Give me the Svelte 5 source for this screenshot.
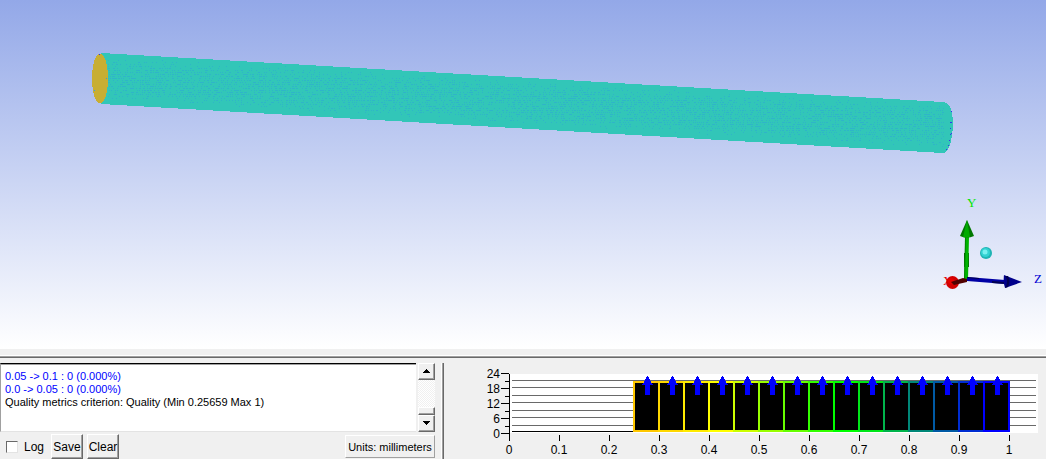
<script lang='ts'>
    type Line = { text: string, info: boolean };
    type Bar = { x: number, color: string };

    let messages: Line[] = [
        { text: '0.05 -> 0.1 : 0 (0.000%)', info: true },
        { text: '0.0 -> 0.05 : 0 (0.000%)', info: true },
        { text: 'Quality metrics criterion: Quality (Min 0.25659 Max 1)', info: false }
    ];
    let shown: Line[] = $state(messages);
    let log: boolean = $state(false);
    let logBox: HTMLElement;

    const colors: string[] = ['#ffc800', '#ffd800', '#ffeb00', '#ffff00', '#ccff00', '#99ff00', '#66ff00', '#33ff00',
        '#00ff00', '#00e619', '#00b44b', '#008778', '#005aa5', '#002dd2', '#0000ff'];
    const bars: Bar[] = colors.map((color, i) => ({ x: 190 + i * 25, color }));
    const yTicks: number[] = [24, 18, 12, 6, 0];
    const xTicks: string[] = ['0', '0.1', '0.2', '0.3', '0.4', '0.5', '0.6', '0.7', '0.8', '0.9', '1'];
    const gridLines: number[] = [17, 24, 32, 39, 47, 54, 62];

    // surface mesh seen from far away: small dots along the tube
    function meshDots(): string {
        let seed: number = 7;
        let path: string = '';
        const next = (): number => {
            seed = (seed * 16807) % 2147483647;
            return seed / 2147483647;
        };
        for(let i = 0; i < 6000; ++i) {
            const x = Math.floor(108 + next() * 836);
            const spread = (next() + next() * 3) / 4;
            const y = Math.floor((57 + (x - 102) * 0.0583 + spread * 43) / 2) * 2;
            path += `M${x} ${y}h1v1h-1z`;
        }
        return path;
    }
    const dots: string = meshDots();

    function scrollLog(step: number): void {
        logBox.scrollTop += step;
    }

    function save(): void {
        const blob = new Blob([shown.map(m => m.text).join('\n')], { type: 'text/plain' });
        const link = document.createElement('a');
        link.href = URL.createObjectURL(blob);
        link.download = 'messages.txt';
        link.click();
    }
</script>

<div class='app'>
    <svg class='scene' viewBox='0 0 1046 349' role='img' aria-label='Mesh view'>
        <g shape-rendering='crispEdges'>
            <path fill='#32c6b8' d='M101 53L943 102Q948 102 951 109Q953 116 953 126Q952 140 949 147Q947 153 943 153L101 104Z' />
            <path fill='#2fb5c8' d={dots} />
            <ellipse cx='100' cy='78.5' rx='8' ry='25' fill='#c8ae33' />
            <path fill='#2a9df0' d='M106 78h1v1h-1zM94 90h1v1h-1z' />
            <path fill='#3232f0' d='M951 111h1v1h-1zM950 122h2v1h-2zM950 128h1v1h-1zM951 133h1v1h-1zM950 134h1v1h-1zM949 140h1v1h-1zM948 145h1v1h-1zM946 149h1v1h-1zM99 54h1v1h-1z' />
        </g>
        <path d='M964 253h5v14h-5z' fill='#005a00' />
        <path d='M965 237h4l-1 43h-4l1-25z' fill='#00b400' />
        <path d='M965 237h1l-1 43h-1z' fill='#008200' />
        <path d='M967 220l7 16q-7 3-14 0z' fill='#007800' />
        <path d='M967 220l3 17q-4 1-7 0z' fill='#00aa00' />
        <path d='M967 277l38 3v4l-38-3z' fill='#0000a5' />
        <path d='M967 277l12 1v1l-12-1zM992 281l13 1v2l-13-1z' fill='#000050' />
        <path d='M1004 275l18 7-17 6q-2-6-1-13z' fill='#00008c' />
        <path d='M1005 276q4 5 0 12l3-1q3-6 0-11z' fill='#000050' />
        <text x='943' y='285' class='axis' fill='#e60000'>X</text>
        <circle cx='952.5' cy='282.5' r='6.5' fill='#d20000' />
        <circle cx='951' cy='281' r='3' fill='#e60000' />
        <path d='M951 282l12-4 4 1v3l-13 3z' fill='#500000' />
        <circle cx='986' cy='253' r='6' fill='#1eb4b4' />
        <circle cx='985.5' cy='252.5' r='4.5' fill='#32d2d2' />
        <circle cx='985' cy='252' r='2.5' fill='#78f0f0' />
        <text x='967' y='207' class='axis' fill='#00e600'>Y</text>
        <text x='1034' y='283' class='axis' fill='#0000d2'>Z</text>
    </svg>

    <div class='splitter'></div>

    <div class='bottom'>
        <div class='messages'>
            <div class='log-row'>
                <div class='log' bind:this={logBox}>
                    {#each shown as line}
                        <p class:info={line.info}>{line.text}</p>
                    {/each}
                </div>
                <div class='scrollbar'>
                    <button class='arrow' aria-label='Scroll up' onclick={() => scrollLog(-13)}>
                        <svg viewBox='0 0 9 5'><path d='M4 0h1v1h1v1h1v1h1v1H1V3h1V2h1V1h1z' /></svg>
                    </button>
                    <div class='track'><div class='thumb'></div></div>
                    <button class='arrow' aria-label='Scroll down' onclick={() => scrollLog(13)}>
                        <svg viewBox='0 0 9 5'><path d='M1 0h7v1H7v1H6v1H5v1H4V3H3V2H2V1H1z' /></svg>
                    </button>
                </div>
            </div>
            <div class='controls'>
                <label><input type='checkbox' bind:checked={log} /> Log</label>
                <button class='btn' onclick={save}>Save</button>
                <button class='btn' onclick={() => shown = []}>Clear</button>
                <span class='units'>Units: millimeters</span>
            </div>
        </div>

        <svg class='chart' viewBox='0 0 602 96' role='img' aria-label='Quality histogram'>
            <g shape-rendering='crispEdges'>
                <rect x='66' y='11' width='528' height='59' fill='#fff' />
                {#each gridLines as y}
                    <rect x='68' {y} width='524' height='1' fill='#696969' />
                {/each}
                <rect x='68' y='68' width='122' height='1' />
                <rect x='65' y='11' width='1' height='67' />
                {#each yTicks as _, i}
                    <rect x='57' y={10 + i * 15} width='8' height='1' />
                    {#if i < yTicks.length - 1}
                        <rect x='61' y={18 + i * 15} width='4' height='1' />
                    {/if}
                {/each}
                {#each xTicks as _, i}
                    <rect x={65 + i * 50} y='72' width='1' height='6' />
                {/each}
                {#each bars as bar}
                    <rect x={bar.x} y='19' width='25' height='49' stroke={bar.color} stroke-width='2' />
                {/each}
                {#each bars as bar}
                    <path fill='#00f' d='M{bar.x + 13} 13h1v1h1v2h1v2h1v2h1v1h1v1h-3v10h-5v-10h-3v-1h1v-1h1v-2h1v-2h1v-2h1z' />
                {/each}
            </g>
            {#each yTicks as tick, i}
                <text x='56' y={15 + i * 15} text-anchor='end'>{tick}</text>
            {/each}
            {#each xTicks as tick, i}
                <text x={65 + i * 50} y='91' text-anchor='middle'>{tick}</text>
            {/each}
        </svg>
    </div>
</div>

<style>
    :global(body) {
        margin: 0;
        background: #f0f0f0;
    }
    .app {
        font-family: "Liberation Sans", Arial, sans-serif;
        font-size: 11px;
        color: black;
        overflow: hidden;
    }
    .scene {
        display: block;
        width: 100%;
        background: linear-gradient(#93a8e8, #ffffff);
    }
    .axis {
        font-family: "Liberation Serif", serif;
        font-size: 13px;
    }
    .splitter {
        height: 5px;
        border-bottom: 1px solid #696969;
        box-shadow: inset 0 -1px #a0a0a0, inset 0 -2px white;
        padding-bottom: 3px;
        margin-bottom: 5px;
    }
    .bottom {
        display: grid;
        grid-template-columns: 444fr 602fr;
    }
    .messages {
        box-sizing: border-box;
        padding-right: 9px;
        box-shadow: inset -1px 0 #696969, inset -2px 0 #a0a0a0, inset -3px 0 white;
    }
    .log-row {
        display: flex;
        gap: 2px;
        height: 69px;
    }
    .log {
        flex: 1;
        box-sizing: border-box;
        padding: 6px 4px;
        background: white;
        border-top: 1px solid black;
        border-left: 1px solid #a0a0a0;
        border-bottom: 1px solid #e3e3e3;
        box-shadow: inset 0 1px #a0a0a0;
        overflow: hidden;
    }
    .log p {
        margin: 0;
        line-height: 13px;
        white-space: nowrap;
    }
    .log .info {
        color: #0000ff;
    }
    .scrollbar {
        width: 17px;
        display: flex;
        flex-direction: column;
    }
    .arrow, .thumb, .btn {
        box-sizing: border-box;
        background: #f0f0f0;
        border: 1px solid;
        border-color: white #696969 #696969 white;
        box-shadow: inset -1px -1px #a0a0a0;
        border-radius: 0;
    }
    .arrow {
        height: 17px;
        padding: 0;
        display: flex;
        align-items: center;
        justify-content: center;
    }
    .arrow svg {
        width: 9px;
        height: 5px;
        shape-rendering: crispEdges;
    }
    .track {
        flex: 1;
        display: flex;
        align-items: flex-end;
        background: repeating-conic-gradient(#ffffff 0 25%, #f0f0f0 0 50%) 0 0 / 2px 2px;
    }
    .thumb {
        width: 100%;
        height: 8px;
    }
    .controls {
        display: flex;
        align-items: center;
        gap: 4px;
        height: 25px;
        padding: 2px 0 0 6px;
        font-size: 12px;
    }
    label {
        display: flex;
        align-items: center;
        gap: 6px;
        width: 41px;
    }
    input {
        appearance: none;
        box-sizing: border-box;
        width: 12px;
        height: 12px;
        margin: 0;
        background: white;
        border: 1px solid;
        border-color: #696969 #e3e3e3 #e3e3e3 #696969;
    }
    input:checked {
        background: #404040;
    }
    .btn {
        width: 32px;
        height: 25px;
        padding: 0;
        font: inherit;
        color: black;
    }
    .units {
        box-sizing: border-box;
        width: 90px;
        height: 23px;
        margin-left: auto;
        line-height: 22px;
        text-align: center;
        font-size: 11px;
        white-space: nowrap;
        border: 1px solid;
        border-color: white #a0a0a0 #a0a0a0 white;
    }
    .chart {
        display: block;
        width: 100%;
    }
    .chart text {
        font-size: 12px;
    }
</style>
